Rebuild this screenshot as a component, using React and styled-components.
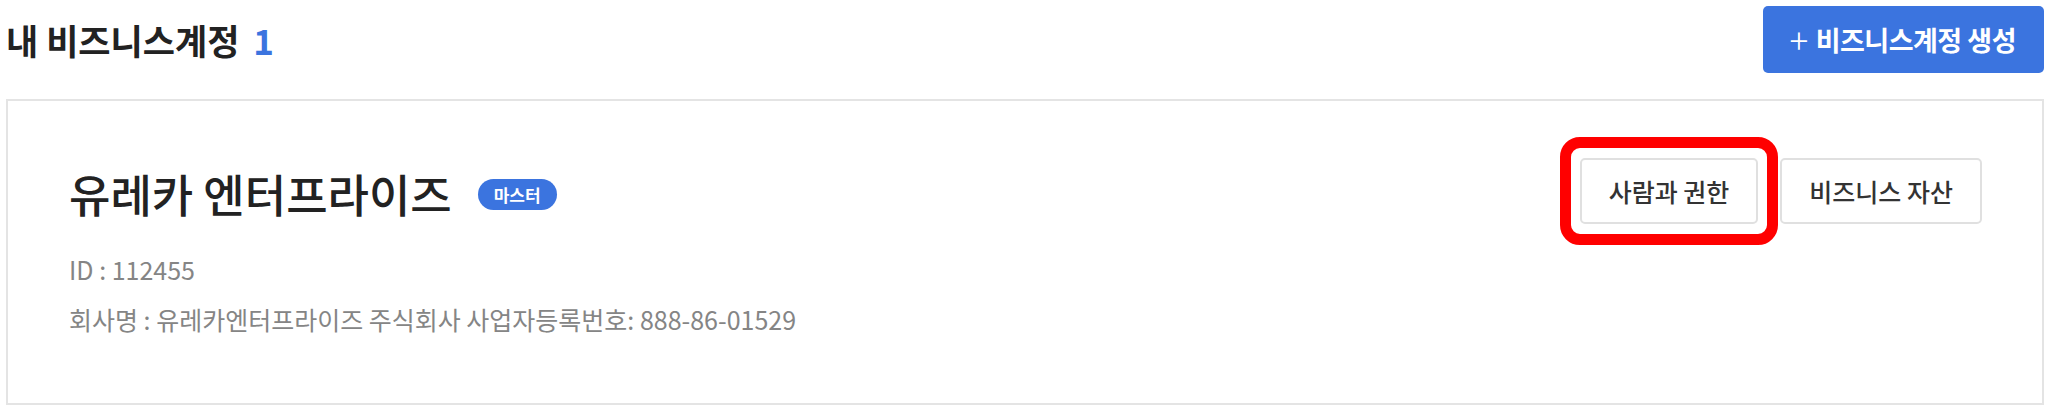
import styled, { createGlobalStyle } from 'styled-components'

const GlobalStyle = createGlobalStyle`
  * { box-sizing: border-box; }
  body {
    margin: 0;
    background: #fff;
    font-family: "Noto Sans CJK KR", "Noto Sans", sans-serif;
    color: #222;
  }
`

const BLUE = '#3b74df'

function App() {
  return (
    <Page>
      <GlobalStyle />
      <Header>
        <Title>
          내 비즈니스계정<Count>1</Count>
        </Title>
        <CreateButton>
          <Plus>+</Plus>비즈니스계정 생성
        </CreateButton>
      </Header>

      <Card>
        <CardTop>
          <CardInfo>
            <NameRow>
              <Name>유레카 엔터프라이즈</Name>
              <Badge>마스터</Badge>
            </NameRow>
            <InfoList>
              <InfoLine>ID : 112455</InfoLine>
              <InfoLine>회사명 : 유레카엔터프라이즈 주식회사 사업자등록번호: 888-86-01529</InfoLine>
            </InfoList>
          </CardInfo>
          <Actions>
            <Highlight>
              <OutlineButton>사람과 권한</OutlineButton>
            </Highlight>
            <OutlineButton>비즈니스 자산</OutlineButton>
          </Actions>
        </CardTop>
      </Card>
    </Page>
  )
}

const Page = styled.div`
  padding: 6px 4px 0 6px;
`

const Header = styled.div`
  display: flex;
  align-items: center;
  justify-content: space-between;
  height: 67px;
`

const Title = styled.h2`
  margin: 0;
  font-size: 35px;
  font-weight: 700;
  line-height: 46px;
  color: #222;
  display: flex;
  align-items: center;
`

const Count = styled.span`
  color: ${BLUE};
  margin-left: 14px;
`

const CreateButton = styled.button`
  height: 67px;
  padding: 0 28px 0 26px;
  border: none;
  border-radius: 5px;
  background: ${BLUE};
  color: #fff;
  font-family: inherit;
  font-size: 27px;
  font-weight: 700;
  letter-spacing: -0.5px;
  display: flex;
  align-items: center;
  cursor: pointer;
`

const Plus = styled.span`
  font-weight: 300;
  font-size: 35px;
  line-height: 1;
  margin-right: 8px;
  margin-top: -3px;
`

const Card = styled.div`
  margin-top: 26px;
  height: 306px;
  border: 2px solid #e4e4e4;
  padding: 57px 60px 0 61px;
`

const CardTop = styled.div`
  display: flex;
  justify-content: space-between;
  align-items: flex-start;
`

const CardInfo = styled.div`
  display: flex;
  flex-direction: column;
`

const NameRow = styled.div`
  display: flex;
  align-items: center;
  height: 72px;
`

const Name = styled.h3`
  margin: 0;
  font-size: 45px;
  font-weight: 500;
  line-height: 60px;
  color: #222;
`

const Badge = styled.span`
  margin-left: 26px;
  height: 31px;
  padding: 0 16px;
  border-radius: 16px;
  background: ${BLUE};
  color: #fff;
  font-size: 17px;
  font-weight: 700;
  display: inline-flex;
  align-items: center;
`

const InfoList = styled.div`
  margin-top: 21px;
  display: flex;
  flex-direction: column;
  gap: 14px;
`

const InfoLine = styled.p`
  margin: 0;
  font-size: 25px;
  line-height: 36px;
  color: #858585;
`

const Actions = styled.div`
  display: flex;
  gap: 22px;
`

const Highlight = styled.div`
  position: relative;
  display: flex;

  &::after {
    content: '';
    position: absolute;
    inset: -21px -20px;
    border: 11px solid #f00;
    border-radius: 20px;
    pointer-events: none;
  }
`

const OutlineButton = styled.button`
  height: 66px;
  padding: 0 27px;
  background: #fff;
  border: 2px solid #e0e0e0;
  border-radius: 5px;
  font-family: inherit;
  font-size: 25px;
  font-weight: 500;
  color: #333;
  cursor: pointer;
`

export default App
